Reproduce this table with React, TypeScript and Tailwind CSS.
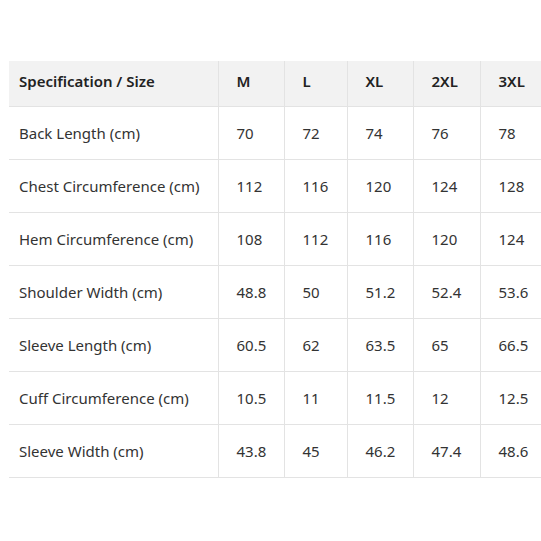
const headers = ["Specification / Size", "M", "L", "XL", "2XL", "3XL"];

const rows: (string | number)[][] = [
  ["Back Length (cm)", 70, 72, 74, 76, 78],
  ["Chest Circumference (cm)", 112, 116, 120, 124, 128],
  ["Hem Circumference (cm)", 108, 112, 116, 120, 124],
  ["Shoulder Width (cm)", 48.8, 50, 51.2, 52.4, 53.6],
  ["Sleeve Length (cm)", 60.5, 62, 63.5, 65, 66.5],
  ["Cuff Circumference (cm)", 10.5, 11, 11.5, 12, 12.5],
  ["Sleeve Width (cm)", 43.8, 45, 46.2, 47.4, 48.6],
];

const colWidths = ["w-[209px]", "w-[66px]", "w-[63px]", "w-[66px]", "w-[67px]", "w-[63px]"];

export default function App() {
  return (
    <div className="w-[541px] h-[541px] bg-white overflow-hidden pt-[61px] pl-[9px] font-['Noto_Sans',sans-serif]">
      <table className="w-[534px] border-collapse table-fixed text-[15px] text-[#333]">
        <thead>
          <tr className="bg-[#f2f2f2] h-[45px] border-b border-[#e3e3e3]">
            {headers.map((h, i) => (
              <th
                key={h}
                className={`${colWidths[i]} text-left font-semibold text-[#222] pb-[4px] ${i === 0 ? "pl-[10px]" : "pl-[18px] border-l border-[#e3e3e3]"}`}
              >
                {h}
              </th>
            ))}
          </tr>
        </thead>
        <tbody>
          {rows.map((r) => (
            <tr key={r[0]} className="h-[53px] border-b border-[#e3e3e3]">
              {r.map((c, i) => (
                <td
                  key={i}
                  className={`pt-px ${i === 0 ? "pl-[10px]" : "pl-[18px] border-l border-[#e3e3e3]"}`}
                >
                  {c}
                </td>
              ))}
            </tr>
          ))}
        </tbody>
      </table>
    </div>
  );
}
